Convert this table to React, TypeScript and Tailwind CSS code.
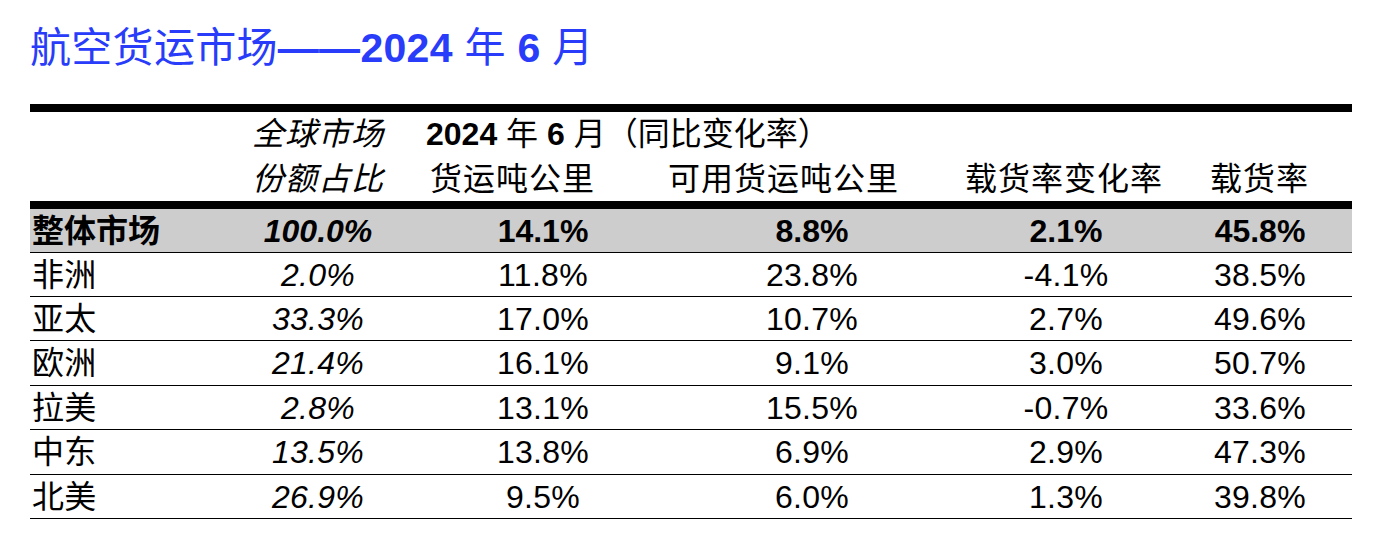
const rows = [
  { region: '非洲', share: '2.0%', ftk: '11.8%', actk: '23.8%', lfChange: '-4.1%', lf: '38.5%', tall: false },
  { region: '亚太', share: '33.3%', ftk: '17.0%', actk: '10.7%', lfChange: '2.7%', lf: '49.6%', tall: false },
  { region: '欧洲', share: '21.4%', ftk: '16.1%', actk: '9.1%', lfChange: '3.0%', lf: '50.7%', tall: true },
  { region: '拉美', share: '2.8%', ftk: '13.1%', actk: '15.5%', lfChange: '-0.7%', lf: '33.6%', tall: false },
  { region: '中东', share: '13.5%', ftk: '13.8%', actk: '6.9%', lfChange: '2.9%', lf: '47.3%', tall: true },
  { region: '北美', share: '26.9%', ftk: '9.5%', actk: '6.0%', lfChange: '1.3%', lf: '39.8%', tall: false },
]

const bodyCols = 'grid grid-cols-[198px_180px_270px_268px_240px_148px_1fr] items-center'

export default function App() {
  return (
    <div className="w-[1373px] h-[541px] bg-white text-black font-['Liberation_Sans','Noto_Sans_CJK_SC',sans-serif]">
      {/* Title */}
      <div className="h-[104px] pl-[30px] pt-[28px] text-[41px] leading-none text-[#283cfa] whitespace-nowrap tracking-[0.3px]">
        航空货运市场<span className="font-bold">——2024</span> 年 <span className="font-bold">6</span> 月
      </div>

      <div className="ml-[30px] w-[1322px] text-[32px] leading-none">
        <div className="h-[8px] bg-black" />

        {/* Header */}
        <div className="grid grid-cols-[198px_180px_1fr] items-center h-[44px]">
          <div />
          <div className="text-center italic tracking-[1px]">全球市场</div>
          <div className="pl-[18px] whitespace-nowrap">
            <span className="font-bold">2024</span> 年 <span className="font-bold">6</span> 月（同比变化率）
          </div>
        </div>
        <div className="grid grid-cols-[198px_180px_260px_297px_245px_1fr] items-center h-[45px] whitespace-nowrap tracking-[1px]">
          <div />
          <div className="text-center italic">份额占比</div>
          <div className="pl-[22px]">货运吨公里</div>
          <div>可用货运吨公里</div>
          <div>载货率变化率</div>
          <div>载货率</div>
        </div>

        <div className="h-[8px] bg-black" />

        {/* Overall market */}
        <div className={`${bodyCols} h-[44px] bg-[#cdcdcd] border-b border-black font-bold`}>
          <div className="pl-[2px]">整体市场</div>
          <div className="text-center italic">100.0%</div>
          <div className="text-center">14.1%</div>
          <div className="text-center">8.8%</div>
          <div className="text-center">2.1%</div>
          <div className="text-center">45.8%</div>
          <div />
        </div>

        {rows.map((r) => (
          <div key={r.region} className={`${bodyCols} ${r.tall ? 'h-[45px]' : 'h-[44px]'} border-b border-black tracking-[0.3px]`}>
            <div className="pl-[2px]">{r.region}</div>
            <div className="text-center italic">{r.share}</div>
            <div className="text-center">{r.ftk}</div>
            <div className="text-center">{r.actk}</div>
            <div className="text-center">{r.lfChange}</div>
            <div className="text-center">{r.lf}</div>
            <div />
          </div>
        ))}
      </div>
    </div>
  )
}
